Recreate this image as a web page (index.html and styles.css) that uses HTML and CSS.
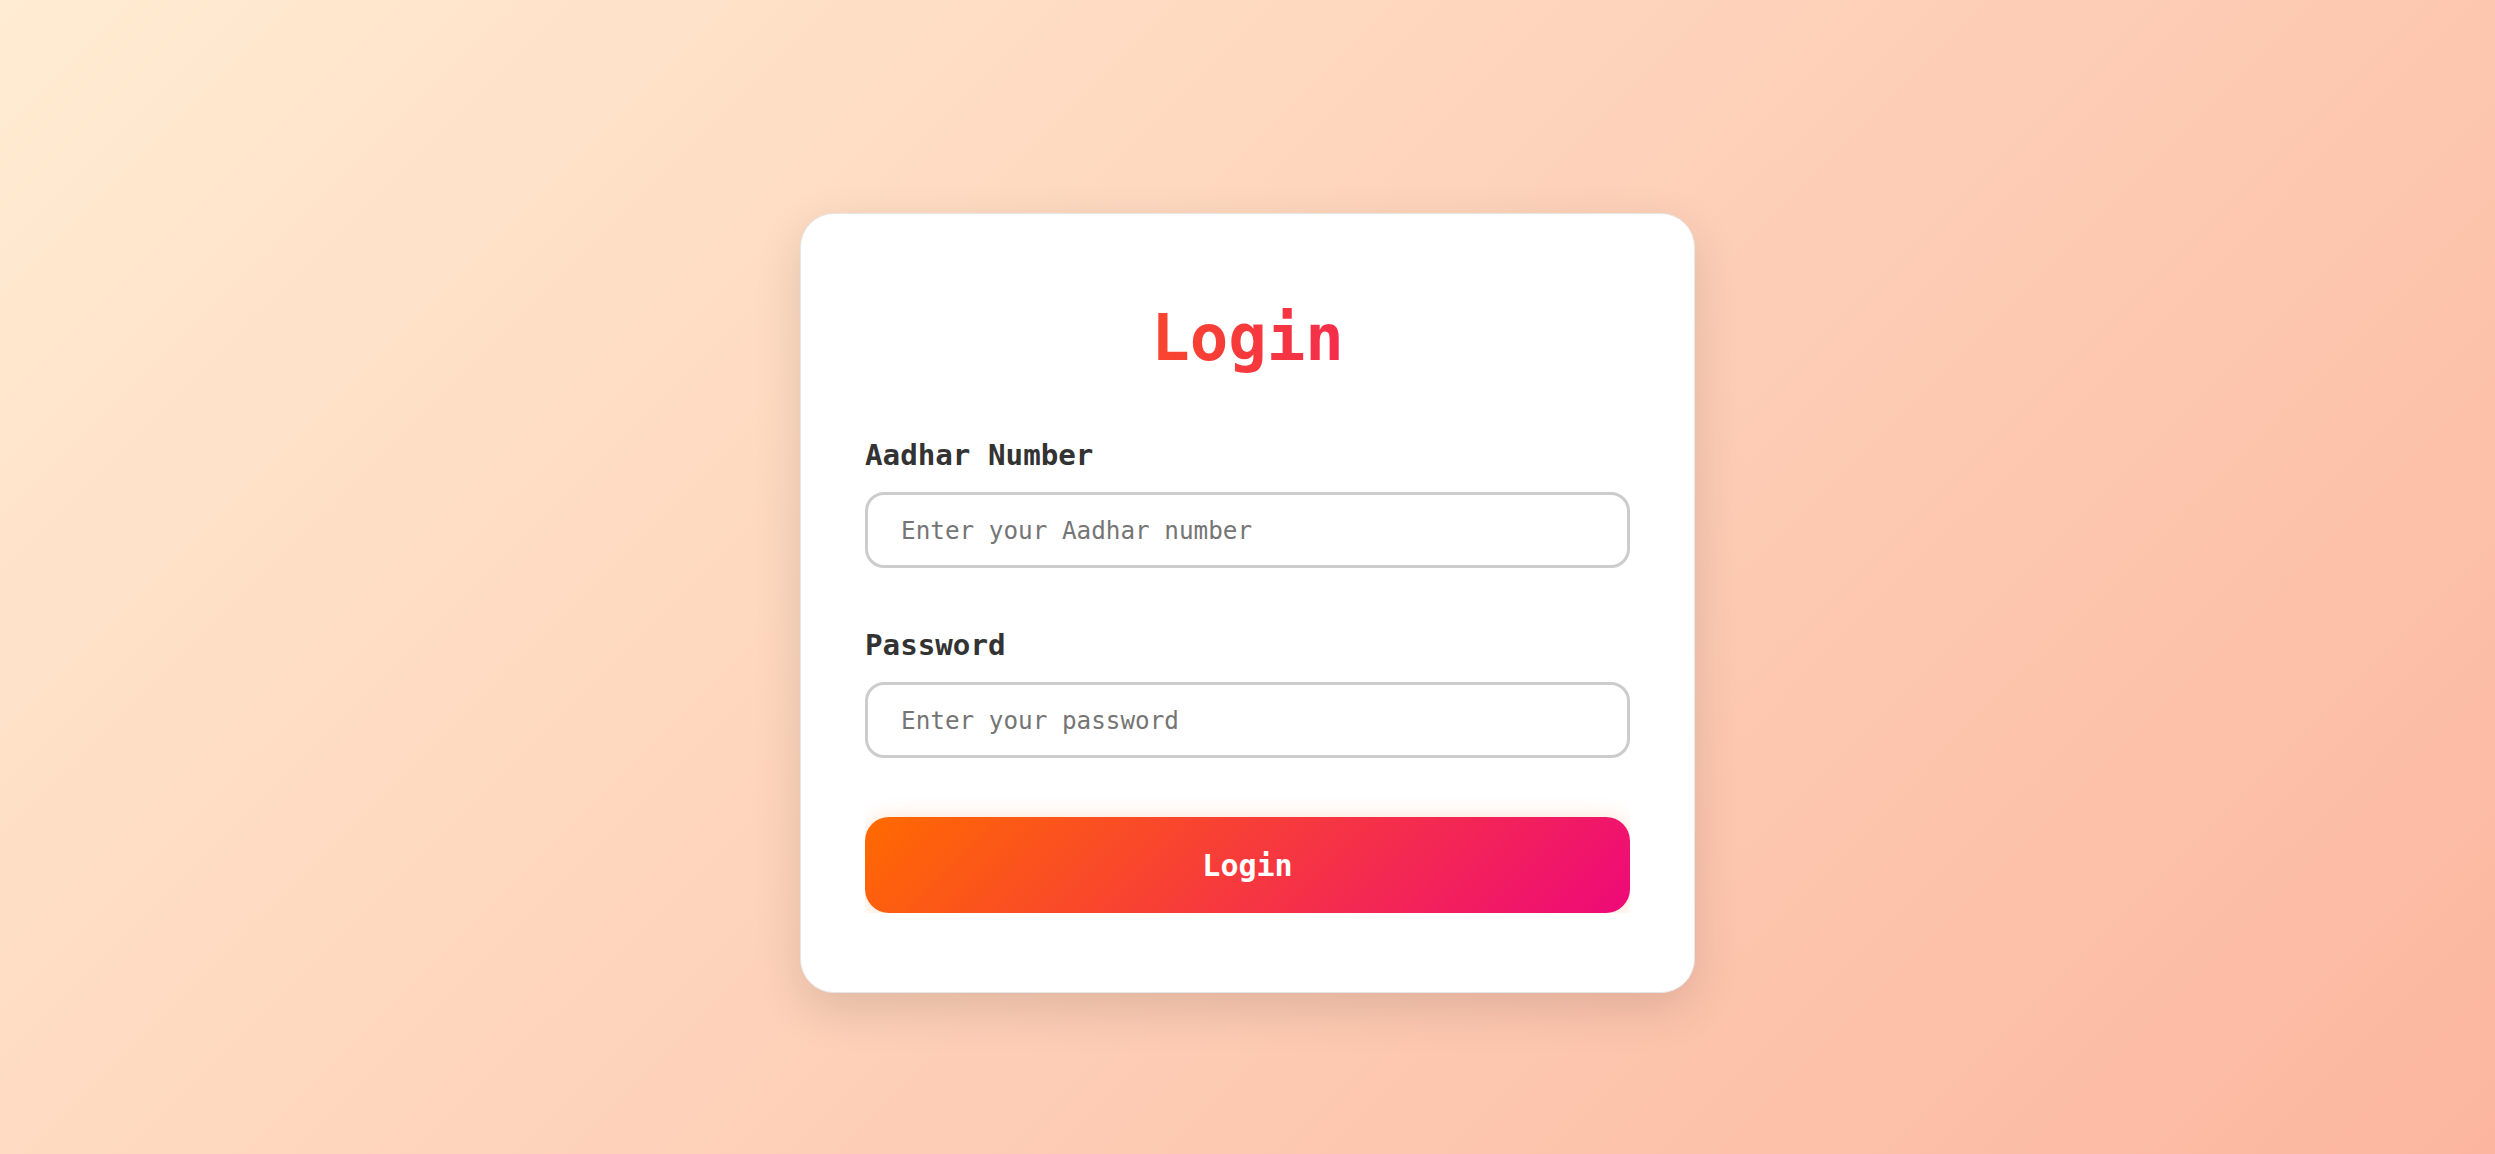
FILE: index.html
```html
<!DOCTYPE html>
<html lang="en">
<head>
<meta charset="utf-8">
<title>Login</title>
<link rel="stylesheet" href="styles.css">
</head>
<body>
  <main class="card">
    <h1 class="title">Login</h1>
    <form class="form">
      <div class="group group-first">
        <label class="label" for="aadhar">Aadhar Number</label>
        <input class="input" id="aadhar" type="text" placeholder="Enter your Aadhar number">
      </div>
      <div class="group">
        <label class="label" for="password">Password</label>
        <input class="input" id="password" type="password" placeholder="Enter your password">
      </div>
      <div class="btn-wrap">
        <button class="btn" type="button">Login</button>
      </div>
    </form>
  </main>
</body>
</html>
```

FILE: styles.css
```css
* { box-sizing: border-box; }
html, body { margin: 0; padding: 0; }
body {
  min-height: 100vh;
  display: flex;
  justify-content: center;
  align-items: center;
  padding-top: 52px;
  background: linear-gradient(135deg, #ffecd2 0%, #fcb69f 100%);
  font-family: "DejaVu Sans Mono", monospace;
}
.card {
  width: 895px;
  background: #fff;
  border: 1px solid #e6e6e6;
  border-radius: 34px;
  padding: 64px;
  box-shadow: 0 16px 48px rgba(0, 0, 0, 0.12);
}
.title {
  margin: 22px 0 62px;
  font-size: 64px;
  line-height: 76px;
  font-weight: 700;
  text-align: center;
  background: linear-gradient(90deg, #ff6a00, #ee0979);
  -webkit-background-clip: text;
  background-clip: text;
  color: transparent;
}
.form { display: flex; flex-direction: column; }
.group { display: flex; flex-direction: column; }
.group-first { margin-bottom: 60px; }
.label {
  font-size: 29.2px;
  line-height: 34px;
  font-weight: 700;
  color: #333;
  margin-bottom: 20px;
}
.input {
  height: 76px;
  border: 3.5px solid #ccc;
  border-radius: 19px;
  padding: 0 32px 0 33px;
  font-family: "DejaVu Sans Mono", monospace;
  font-size: 24.3px;
  color: #333;
  background: #fff;
  outline: none;
}
.input::placeholder { color: #757575; }
.btn-wrap {
  margin-top: 39px;
  padding-top: 20px;
  overflow: hidden;
  margin-bottom: 15px;
}
.btn {
  display: block;
  width: 100%;
  height: 96px;
  border: none;
  border-radius: 24px;
  background: linear-gradient(135deg, #ff6a00, #ee0979);
  color: #fff;
  font-family: "DejaVu Sans Mono", monospace;
  font-size: 30px;
  font-weight: 700;
  box-shadow: 0 2px 22px rgba(255, 106, 0, 0.22);
  cursor: pointer;
}
```
